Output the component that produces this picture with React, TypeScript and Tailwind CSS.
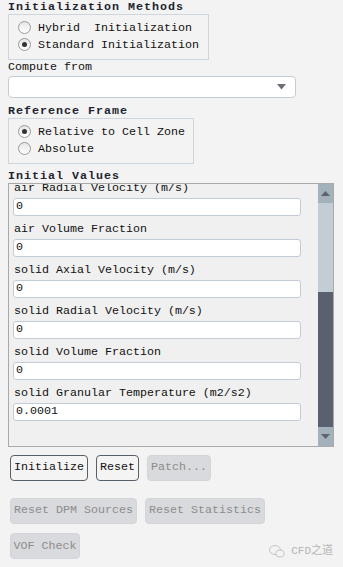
const font = { fontFamily: '"Liberation Mono", "Noto Sans CJK SC", monospace' }

function Radio({ checked, label }: { checked?: boolean; label: string }) {
  return (
    <div className="flex h-[17px] items-center">
      <span className="ml-[9px] flex h-[13px] w-[13px] items-center justify-center rounded-full border border-[#9a9a9a] bg-gradient-to-b from-[#e6e6e6] to-white">
        {checked && <span className="h-[5px] w-[5px] rounded-full bg-[#333]" />}
      </span>
      <span className="ml-[7px] whitespace-pre text-[11.67px] leading-[14px] text-[#111]">{label}</span>
    </div>
  )
}

function Heading({ children, className = '' }: { children: string; className?: string }) {
  return (
    <div className={`h-[14px] text-[11.67px] font-bold leading-[14px] tracking-[1px] text-[#1d2430] ${className}`}>
      {children}
    </div>
  )
}

function Field({ label, value }: { label: string; value: string }) {
  return (
    <div className="mb-[6px]">
      <div className="ml-[5px] h-[14px] whitespace-pre text-[11.67px] leading-[14px] text-[#111]">{label}</div>
      <div className="ml-[4px] mt-[3px] flex h-[18px] w-[288px] items-center rounded-[3px] border border-[#c3cbd6] bg-white pl-[2px] text-[11.67px] text-[#111]">
        {value}
      </div>
    </div>
  )
}

function Btn({ label, w, disabled }: { label: string; w: string; disabled?: boolean }) {
  return (
    <div
      className={`flex h-[26px] items-center justify-center rounded-[4px] border text-[11.67px] ${w} ${
        disabled ? 'border-[#d3d5d9] bg-[#d9dadd] text-[#8c8c8c]' : 'border-[#56606c] bg-[#f4f4f4] text-[#111]'
      }`}
    >
      {label}
    </div>
  )
}

export default function App() {
  const fields = [
    ['air Radial Velocity (m/s)', '0'],
    ['air Volume Fraction', '0'],
    ['solid Axial Velocity (m/s)', '0'],
    ['solid Radial Velocity (m/s)', '0'],
    ['solid Volume Fraction', '0'],
    ['solid Granular Temperature (m2/s2)', '0.0001'],
  ]
  return (
    <div className="h-[567px] w-[343px] overflow-hidden bg-[#f3f3f3] px-2" style={font}>
      <Heading>Initialization Methods</Heading>
      <div className="h-[46px] w-[201px] border border-[#cdd5de] pt-[4px]">
        <Radio label="Hybrid  Initialization" />
        <Radio checked label="Standard Initialization" />
      </div>
      <div className="h-[14px] text-[11.67px] leading-[14px] text-[#111]">Compute from</div>
      <div className="mt-[2px] flex h-[22px] w-[288px] items-center justify-end rounded-[4px] border border-[#c3cbd6] bg-white pr-[9px]">
        <svg width="9" height="6" viewBox="0 0 9 6">
          <path d="M0 0h9L4.5 5.5z" fill="#6b6f76" />
        </svg>
      </div>
      <Heading className="mt-[6px]">Reference Frame</Heading>
      <div className="h-[46px] w-[186px] border border-[#cdd5de] pt-[4px]">
        <Radio checked label="Relative to Cell Zone" />
        <Radio label="Absolute" />
      </div>
      <Heading className="mt-[5px]">Initial Values</Heading>
      <div className="flex h-[264px] w-[326px] border border-[#a9a9a9] bg-[#f0f0f0]">
        <div className="flex-1 overflow-hidden">
          <div className="-mt-[3px]">
            {fields.map(([l, v]) => (
              <Field key={l} label={l} value={v} />
            ))}
          </div>
        </div>
        <div className="flex w-[15px] flex-col">
          <div className="flex h-[19px] items-center justify-center bg-[#a3b1bb]">
            <svg width="9" height="5" viewBox="0 0 9 5">
              <path d="M4.5 0L9 5H0z" fill="#5d6470" />
            </svg>
          </div>
          <div className="h-[89px] bg-[#c2cdd5]" />
          <div className="flex-1 bg-[#5a6070]" />
          <div className="flex h-[19px] items-center justify-center bg-[#a3b1bb]">
            <svg width="9" height="5" viewBox="0 0 9 5">
              <path d="M0 0h9L4.5 5z" fill="#5d6470" />
            </svg>
          </div>
        </div>
      </div>
      <div className="ml-[2px] mt-[8px] flex gap-[8px]">
        <Btn label="Initialize" w="w-[78px]" />
        <Btn label="Reset" w="w-[43px]" />
        <Btn label="Patch..." w="w-[64px]" disabled />
      </div>
      <div className="ml-[2px] mt-[17px] flex gap-[8px]">
        <Btn label="Reset DPM Sources" w="w-[127px]" disabled />
        <Btn label="Reset Statistics" w="w-[120px]" disabled />
      </div>
      <div className="ml-[2px] mt-[9px] flex items-center justify-between">
        <Btn label="VOF Check" w="w-[70px]" disabled />
        <div className="mt-[10px] flex items-center gap-[6px] pr-[2px] text-[11px] text-[#b5b5b5]">
          <svg width="16" height="13" viewBox="0 0 16 13">
            <ellipse cx="6" cy="5" rx="5.5" ry="4.5" fill="none" stroke="#c4c4c4" />
            <ellipse cx="11" cy="8.5" rx="4.2" ry="3.5" fill="#f3f3f3" stroke="#c4c4c4" />
          </svg>
          <span>CFD之道</span>
        </div>
      </div>
    </div>
  )
}
